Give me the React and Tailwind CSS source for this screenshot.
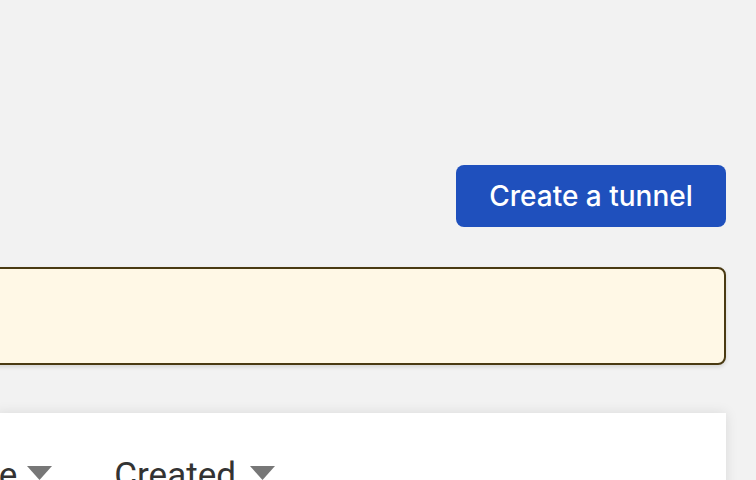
import React from 'react';

const Caret = () => (
  <svg width="25" height="14" viewBox="0 0 25 14" className="mt-[10px] shrink-0">
    <path d="M0 0 H25 L12.5 14 Z" fill="#777777" />
  </svg>
);

const App = () => {
  return (
    <div className="h-[480px] w-[756px] overflow-hidden bg-[#f2f2f2] font-['Roboto',sans-serif]">
      <div className="flex flex-col items-end pr-[30px] pt-[165px]">
        {/* header action */}
        <button className="h-[62px] w-[270px] rounded-lg bg-[#1f50bd] text-[28px] font-medium text-white font-['Inter',sans-serif]">
          Create a tunnel
        </button>

        {/* notice */}
        <div className="mt-[40px] h-[98px] w-[766px] rounded-lg border-2 border-[#4a3a12] bg-[#fff8e6] shadow-[0_2px_4px_rgba(0,0,0,0.12)]" />

        {/* table */}
        <div className="mt-[48px] w-[730px] bg-white pt-[43px] shadow-[0_0_12px_rgba(0,0,0,0.1)]">
          <div className="flex items-start text-[35px] leading-[40px] text-[#333333]">
            <div className="ml-[-72px] flex items-start gap-[10px]">
              <span>Name</span>
              <Caret />
            </div>
            <div className="ml-[62px] flex items-start gap-[14px]">
              <span>Created</span>
              <Caret />
            </div>
          </div>
        </div>
      </div>
    </div>
  );
};

export default App;
